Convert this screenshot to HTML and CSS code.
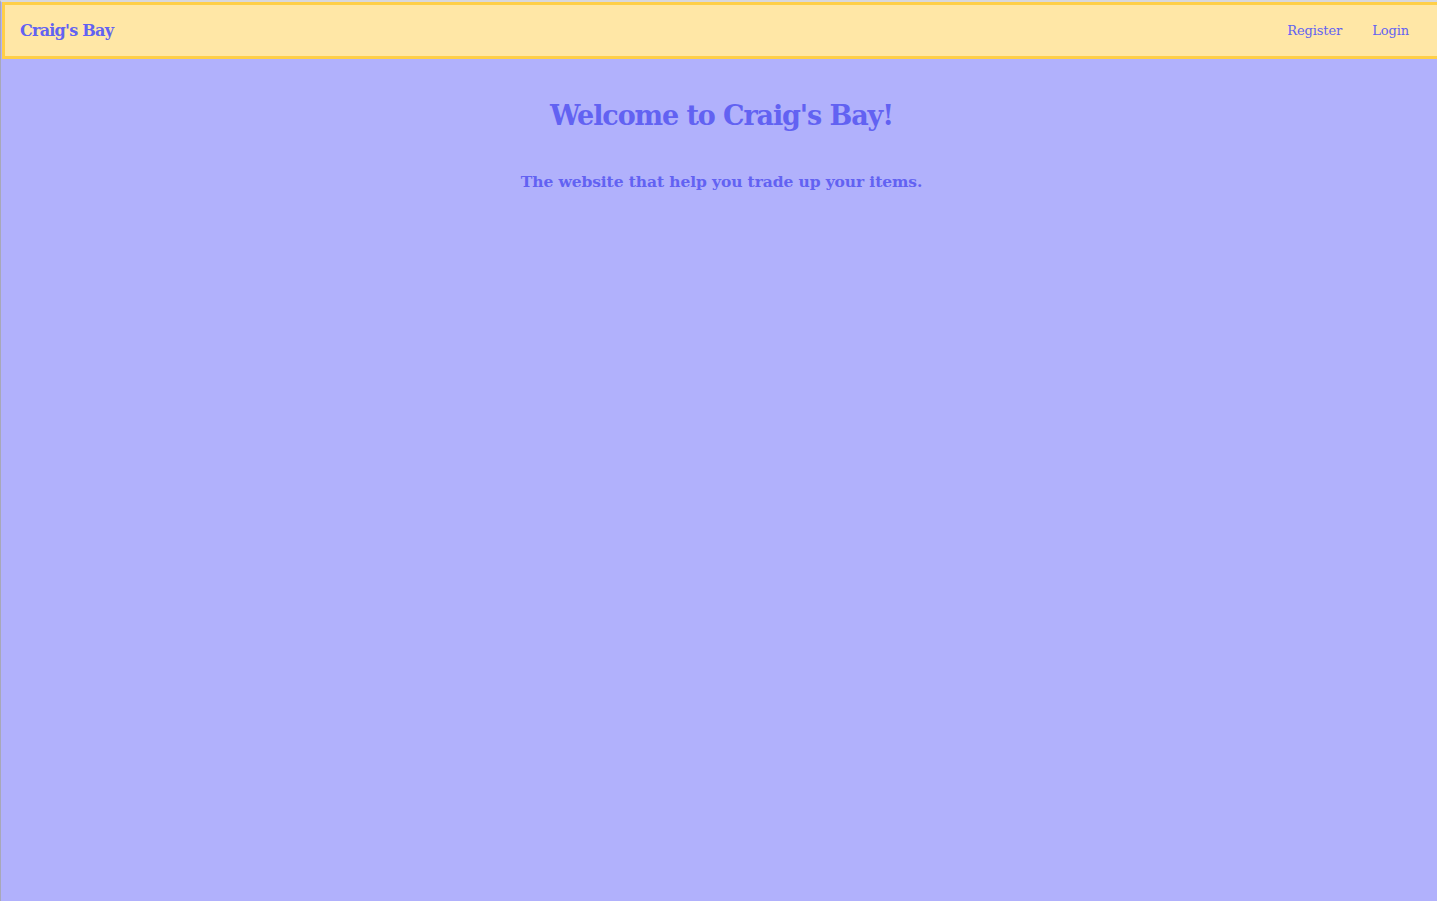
FILE: index.html
```html
<!DOCTYPE html>
<html>
<head>
<meta charset="utf-8">
<title>Craig's Bay</title>
<link rel="stylesheet" href="styles.css">
</head>
<body>
<div class="frame">
  <nav class="navbar">
    <a class="brand" href="#">Craig's Bay</a>
    <div class="links">
      <a href="#">Register</a>
      <a href="#">Login</a>
    </div>
  </nav>
  <main class="hero">
    <h1>Welcome to Craig's Bay!</h1>
    <p>The website that help you trade up your items.</p>
  </main>
</div>
</body>
</html>
```

FILE: styles.css
```css
html, body {
  margin: 0;
  padding: 0;
  height: 100%;
}
body {
  background: #b1b1fc;
  font-family: "DejaVu Serif", "Liberation Serif", serif;
  color: #6262f2;
}
.frame {
  min-height: 100%;
  box-sizing: border-box;
  border-left: 1px solid #a8a8b8;
  border-top: 2px solid #d8d8dc;
  padding-left: 1px;
}
.navbar {
  display: flex;
  align-items: center;
  justify-content: space-between;
  background: #ffe7a6;
  border: 3px solid #ffcf47;
  border-right: none;
  height: 51px;
  padding: 0 0 0 15px;
}
.navbar a {
  color: #6262f2;
  text-decoration: none;
}
.brand {
  font-size: 16px;
  font-weight: bold;
  letter-spacing: -0.75px;
}
.links {
  display: flex;
  gap: 30px;
  padding-right: 28px;
}
.links a {
  font-size: 13px;
  letter-spacing: -0.1px;
}
.links a:first-child {
  margin-left: 0;
}
.hero {
  text-align: center;
  padding-top: 37px;
  padding-left: 4px;
}
.hero h1 {
  margin: 0;
  font-size: 27px;
  font-weight: bold;
  letter-spacing: -1.1px;
  line-height: 40px;
}
.hero p {
  margin: 36px 0 0;
  font-size: 15.5px;
  font-weight: bold;
  letter-spacing: -0.1px;
}
```
